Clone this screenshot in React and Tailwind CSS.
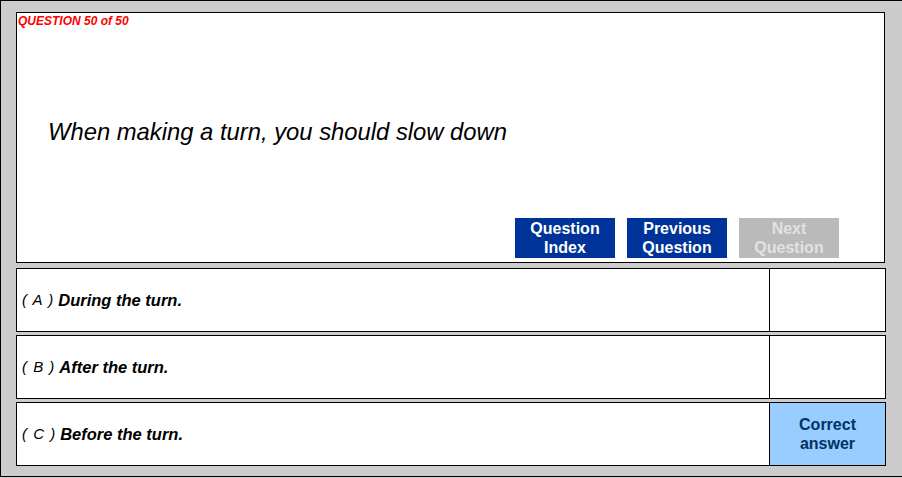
import React from 'react';

const answers = [
  { key: 'A', text: 'During the turn.', correct: false },
  { key: 'B', text: 'After the turn.', correct: false },
  { key: 'C', text: 'Before the turn.', correct: true },
];

const NavButton = ({ children, disabled }) => (
  <div
    className={
      'w-[100px] h-[40px] flex items-center justify-center text-center text-[16px] leading-[19px] font-bold ' +
      (disabled ? 'bg-[#bababa] text-[#e2e2e2]' : 'bg-[#003399] text-white')
    }
  >
    {children}
  </div>
);

const App = () => {
  return (
    <div
      className="w-[910px] h-[478px] bg-[#cccccc] overflow-hidden"
      style={{ fontFamily: '"Liberation Sans", Arial, sans-serif' }}
    >
      <div className="h-[477px] border-l border-t border-b border-black pl-[15px] pt-[11px]">
        <div className="w-[869px] h-[251px] bg-white border border-black flex flex-col">
          <div className="pl-[1px] pt-[2px] text-[12px] leading-[13px] font-bold italic text-[#ff0000]">
            QUESTION 50 of 50
          </div>
          <div className="pl-[31px] pt-[90px] text-[23.8px] leading-[28px] italic text-black">
            When making a turn, you should slow down
          </div>
          <div className="flex gap-[12px] pl-[498px] pt-[72px]">
            <NavButton>Question<br />Index</NavButton>
            <NavButton>Previous<br />Question</NavButton>
            <NavButton disabled>Next<br />Question</NavButton>
          </div>
        </div>
        <div className="flex flex-col gap-[3px] mt-[5px]">
          {answers.map((a) => (
            <div key={a.key} className="w-[870px] h-[64px] bg-white border border-black flex">
              <div className="flex-1 flex items-center pl-[5px] text-black">
                <span className="italic text-[15px] tracking-[1px] mr-[4px]">( {a.key} )</span>
                <span className="italic font-bold text-[16.5px]">{a.text}</span>
              </div>
              <div
                className={
                  'w-[116px] border-l border-black flex items-center justify-center text-center text-[16px] leading-[19px] font-bold ' +
                  (a.correct ? 'bg-[#99ccff] text-[#003366]' : 'bg-white')
                }
              >
                {a.correct ? (
                  <span>Correct<br />answer</span>
                ) : null}
              </div>
            </div>
          ))}
        </div>
      </div>
    </div>
  );
};

export default App;
